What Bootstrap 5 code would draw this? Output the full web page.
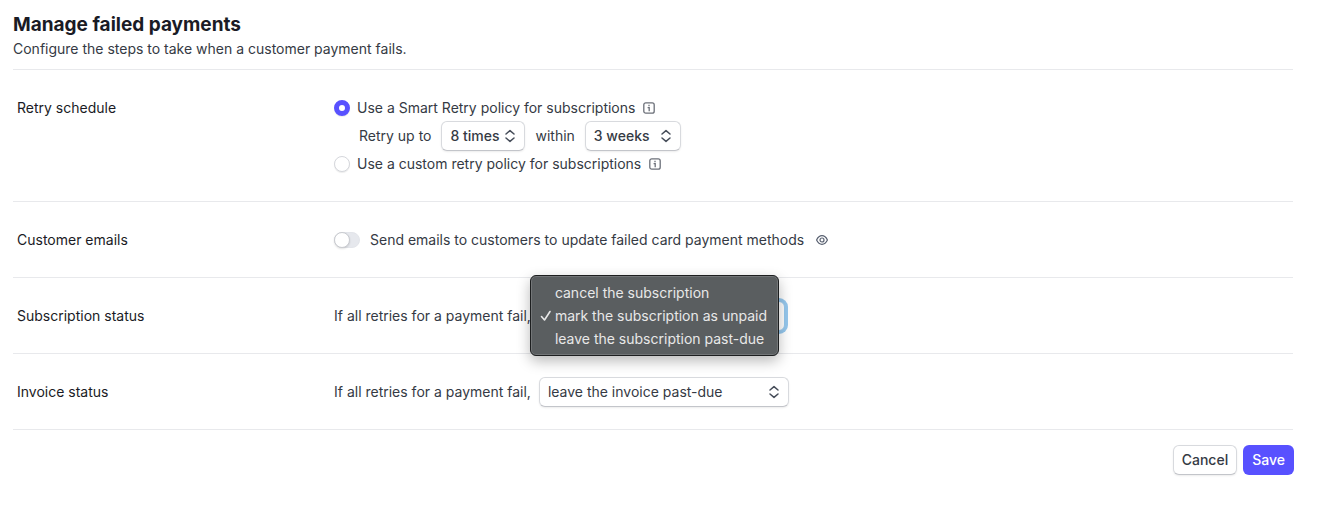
<!DOCTYPE html>
<html lang="en">
<head>
<meta charset="utf-8">
<meta name="viewport" content="width=device-width, initial-scale=1">
<title>Manage failed payments</title>
<link href="https://cdn.jsdelivr.net/npm/bootstrap@5.3.0/dist/css/bootstrap.min.css" rel="stylesheet">
<style>
  :root { --ink: #1a1b25; --body-ink: #353a44; --accent: #5851ff; --line: #e8e9ec; }
  body { font-family: Inter, "Liberation Sans", sans-serif; font-size: 14px; line-height: 20px; color: var(--body-ink); background: #fff; }
  .page { padding: 12px 27px 30px 13px; }
  h1 { font-size: 19px; line-height: 25px; font-weight: 700; color: var(--ink); }
  .subtitle { line-height: 23px; padding-bottom: 9px; border-bottom: 1px solid var(--line); }
  .setting { padding: 24px 4px 23px; border-bottom: 1px solid var(--line); }
  .setting-name { flex: 0 0 317px; line-height: 28px; font-size: 14px; font-weight: 400; color: var(--ink); }
  .line { display: flex; align-items: center; height: 28px; white-space: nowrap; }
  .retry-terms { gap: 10px; padding-left: 25px; }
  .choice-label { margin-left: 7px; }
  .switch-label { margin: 0 12px 0 10px; }
  .line .form-check-input { margin: 0; flex: none; width: 16px; height: 16px; border: 1px solid #d5d7dc; background-image: none; box-shadow: 0 1px 1px rgba(0,0,0,.08); }
  .line .form-check-input:checked { border: 5px solid var(--accent); background-color: #fff; }
  .line .toggle { width: 26px; border-color: #e3e5ea; background: #e6e8ed; border-radius: 8px; position: relative; box-shadow: none; }
  .toggle::before { content: ""; display: block; width: 16px; height: 16px; margin: -1px; border: 1px solid #c9cbd0; border-radius: 50%; background: #fff; box-shadow: 0 1px 2px rgba(0,0,0,.12); }
  .select-box, .btn-plain { border: 1px solid #d8dade; border-bottom-color: #c3c5ca; border-radius: 6px; box-shadow: 0 1px 2px rgba(0,0,0,.08); }
  .select-box { height: 30px; padding: 0 24px 0 8px; font-size: 14px; line-height: 20px; color: var(--body-ink);
    background: #fff url("data:image/svg+xml,%3Csvg xmlns='http://www.w3.org/2000/svg' width='12' height='14' viewBox='0 0 12 14' fill='none' stroke='%23474e5a' stroke-width='1.5' stroke-linecap='round' stroke-linejoin='round'%3E%3Cpath d='M2 5 6 1.600 10 5M2 9 6 12.400 10 9'/%3E%3C/svg%3E") no-repeat right 8px center / 12px 14px; appearance: none; }
  .times { width: 84px; font-weight: 500; }
  .weeks { width: 96px; font-weight: 500; }
  .wide { width: 250px; }
  .status-select { width: 246px; border-color: #96c8ee; box-shadow: 0 0 0 3px #96c8ee; }
  .menu { left: -9px; top: -26px; width: 249px; padding: 5px 0; border: 1px solid #1d1f20; border-radius: 6px; background: #5a5e60; box-shadow: inset 0 0 0 1px #737678, 0 5px 14px rgba(0,0,0,.28); color: #e8e8e8; z-index: 2; }
  .menu li { height: 23px; line-height: 23px; padding-left: 24px; position: relative; }
  .menu svg { position: absolute; left: 9px; top: 6px; }
  .footer-actions { gap: 6px; padding-top: 15px; }
  .rows { margin-right: 1px; }
  .action { height: 30px; padding: 0 8px; font-size: 14px; font-weight: 500; line-height: 20px; border-radius: 6px; }
  .btn-plain { color: var(--body-ink); background: #fff; }
  .btn-save { color: #fff; background: var(--accent); }
</style>
</head>
<body>
<main class="page">
  <div class="rows">
  <h1 class="m-0">Manage failed payments</h1>
  <p class="subtitle m-0">Configure the steps to take when a customer payment fails.</p>

  <section class="setting d-flex">
    <h2 class="setting-name m-0">Retry schedule</h2>
    <div>
      <div class="line">
        <input class="form-check-input" type="radio" name="policy" id="smart" checked>
        <label for="smart" class="choice-label">Use a Smart Retry policy for subscriptions</label>
        <svg class="ms-2" width="12" height="12" viewBox="0 0 12 12" fill="none" stroke="#6c7079" stroke-width="1.3" aria-hidden="true"><rect x=".8" y=".8" width="10.4" height="10.4" rx="2"/><path d="M6 2.800v1.500M4.600 5.700H6.200V9.200"/></svg>
      </div>
      <div class="line retry-terms">
        <label for="times">Retry up to</label>
        <select id="times" class="select-box times"><option>8 times</option></select>
        <label for="weeks">within</label>
        <select id="weeks" class="select-box weeks"><option>3 weeks</option></select>
      </div>
      <div class="line">
        <input class="form-check-input" type="radio" name="policy" id="custom">
        <label for="custom" class="choice-label">Use a custom retry policy for subscriptions</label>
        <svg class="ms-2" width="12" height="12" viewBox="0 0 12 12" fill="none" stroke="#6c7079" stroke-width="1.3" aria-hidden="true"><rect x=".8" y=".8" width="10.4" height="10.4" rx="2"/><path d="M6 2.800v1.500M4.600 5.700H6.200V9.200"/></svg>
      </div>
    </div>
  </section>

  <section class="setting d-flex">
    <h2 class="setting-name m-0">Customer emails</h2>
    <div class="line">
      <input class="form-check-input toggle" type="checkbox" role="switch" id="emails">
      <label for="emails" class="switch-label">Send emails to customers to update failed card payment methods</label>
      <svg width="12" height="12" viewBox="0 0 12 12" fill="none" stroke="#596171" stroke-width="1.2" aria-hidden="true"><path d="M.6 6C1.8 3.4 3.7 1.700 6 1.700S10.200 3.400 11.400 6C10.200 8.600 8.300 10.300 6 10.300S1.800 8.600.6 6Z"/><circle cx="6" cy="6" r="2"/></svg>
    </div>
  </section>

  <section class="setting d-flex">
    <h2 class="setting-name m-0">Subscription status</h2>
    <div class="line">
      <label for="substatus">If all retries for a payment fail,</label>
      <div class="position-relative ms-2">
        <select id="substatus" class="select-box status-select d-block"><option>mark the subscription as unpaid</option></select>
        <ul class="menu list-unstyled position-absolute m-0">
          <li>cancel the subscription</li>
          <li><svg width="12" height="12" viewBox="0 0 12 12" fill="none" stroke="#e8e8e8" stroke-width="1.600" stroke-linecap="round" stroke-linejoin="round" aria-hidden="true"><path d="m1.500 6.500 3 3.500 5.500-8.500"/></svg>mark the subscription as unpaid</li>
          <li>leave the subscription past-due</li>
        </ul>
      </div>
    </div>
  </section>

  <section class="setting d-flex">
    <h2 class="setting-name m-0">Invoice status</h2>
    <div class="line">
      <label for="invstatus">If all retries for a payment fail,</label>
      <select id="invstatus" class="select-box wide ms-2"><option>leave the invoice past-due</option></select>
    </div>
  </section>
  </div>

  <div class="footer-actions d-flex justify-content-end">
    <button type="button" class="btn action btn-plain">Cancel</button>
    <button type="button" class="btn action btn-save">Save</button>
  </div>
</main>
<script src="https://cdn.jsdelivr.net/npm/bootstrap@5.3.0/dist/js/bootstrap.bundle.min.js"></script>
</body>
</html>
